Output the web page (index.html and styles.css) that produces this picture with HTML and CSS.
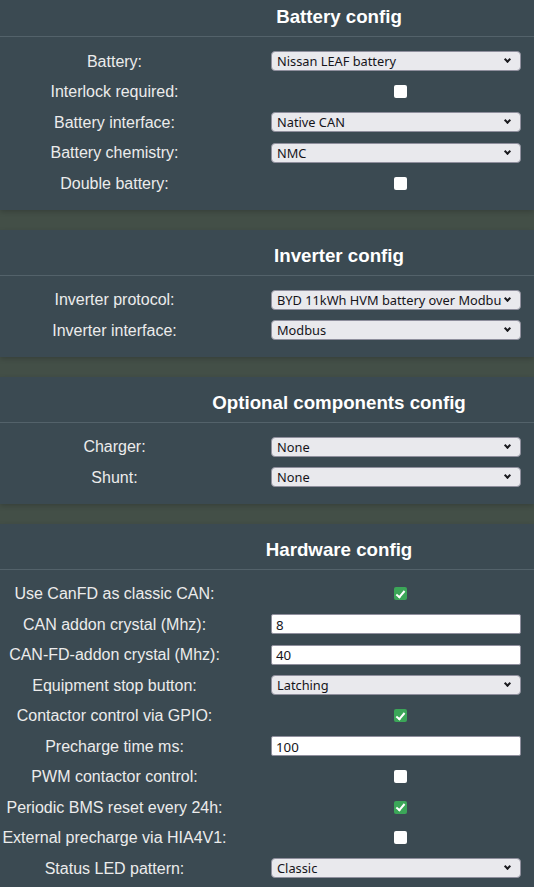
FILE: index.html
```html
<!DOCTYPE html>
<html lang="en">
<head>
    <meta charset="UTF-8">
    <meta name="viewport" content="width=device-width, initial-scale=1.0">
    <title>Settings</title>
    <link rel="stylesheet" href="styles.css">
</head>
<body>
    <div class="settings">
        <!-- Battery -->
        <section class="card">
            <h3 class="card-title">Battery config</h3>
            <div class="fields">
                <label class="field-label" for="battery">Battery:</label>
                <div class="select-wrap">
                    <select id="battery">
                        <option>Nissan LEAF battery</option>
                    </select>
                </div>

                <label class="field-label" for="interlock">Interlock required:</label>
                <input class="check" type="checkbox" id="interlock">

                <label class="field-label" for="batteryIf">Battery interface:</label>
                <div class="select-wrap">
                    <select id="batteryIf">
                        <option>Native CAN</option>
                    </select>
                </div>

                <label class="field-label" for="chemistry">Battery chemistry:</label>
                <div class="select-wrap">
                    <select id="chemistry">
                        <option>NMC</option>
                    </select>
                </div>

                <label class="field-label" for="doubleBattery">Double battery:</label>
                <input class="check" type="checkbox" id="doubleBattery">
            </div>
        </section>

        <!-- Inverter -->
        <section class="card">
            <h3 class="card-title">Inverter config</h3>
            <div class="fields">
                <label class="field-label" for="inverter">Inverter protocol:</label>
                <div class="select-wrap">
                    <select id="inverter">
                        <option>BYD 11kWh HVM battery over Modbus RTU</option>
                    </select>
                </div>

                <label class="field-label" for="inverterIf">Inverter interface:</label>
                <div class="select-wrap">
                    <select id="inverterIf">
                        <option>Modbus</option>
                    </select>
                </div>
            </div>
        </section>

        <!-- Optional -->
        <section class="card">
            <h3 class="card-title">Optional components config</h3>
            <div class="fields">
                <label class="field-label" for="charger">Charger:</label>
                <div class="select-wrap">
                    <select id="charger">
                        <option>None</option>
                    </select>
                </div>

                <label class="field-label" for="shunt">Shunt:</label>
                <div class="select-wrap">
                    <select id="shunt">
                        <option>None</option>
                    </select>
                </div>
            </div>
        </section>

        <!-- Hardware -->
        <section class="card">
            <h3 class="card-title">Hardware config</h3>
            <div class="fields">
                <label class="field-label" for="canfd">Use CanFD as classic CAN:</label>
                <input class="check" type="checkbox" id="canfd" checked>

                <label class="field-label" for="crystal">CAN addon crystal (Mhz):</label>
                <input class="text-input" type="text" id="crystal" value="8">

                <label class="field-label" for="fdCrystal">CAN-FD-addon crystal (Mhz):</label>
                <input class="text-input" type="text" id="fdCrystal" value="40">

                <label class="field-label" for="stopButton">Equipment stop button:</label>
                <div class="select-wrap">
                    <select id="stopButton">
                        <option>Latching</option>
                    </select>
                </div>

                <label class="field-label" for="gpio">Contactor control via GPIO:</label>
                <input class="check" type="checkbox" id="gpio" checked>

                <label class="field-label" for="precharge">Precharge time ms:</label>
                <input class="text-input" type="text" id="precharge" value="100">

                <label class="field-label" for="pwm">PWM contactor control:</label>
                <input class="check" type="checkbox" id="pwm">

                <label class="field-label" for="bmsReset">Periodic BMS reset every 24h:</label>
                <input class="check" type="checkbox" id="bmsReset" checked>

                <label class="field-label" for="hia">External precharge via HIA4V1:</label>
                <input class="check" type="checkbox" id="hia">

                <label class="field-label" for="ledPattern">Status LED pattern:</label>
                <div class="select-wrap">
                    <select id="ledPattern">
                        <option>Classic</option>
                    </select>
                </div>
            </div>
        </section>
    </div>
</body>
</html>
```

FILE: styles.css
```css
* {
    margin: 0;
    padding: 0;
    box-sizing: border-box;
}

body {
    font-family: 'Liberation Sans', Arial, sans-serif;
    background: #434f47;
    color: #ececec;
    overflow: hidden;
}

.settings {
    display: flex;
    flex-direction: column;
    gap: 20px;
    margin-top: -9px;
}

.card {
    background: #3b4a52;
    box-shadow: 0 2px 5px rgba(0, 0, 0, 0.18);
}

.card-title {
    font-size: 18.72px;
    font-weight: bold;
    line-height: 21px;
    color: #ffffff;
    text-align: center;
    padding: 15px 0 9px 144px;
    border-bottom: 1px solid #53626a;
}

.fields {
    display: grid;
    grid-template-columns: 229px 1fr;
    grid-auto-rows: 20px;
    column-gap: 42px;
    row-gap: 10.5px;
    align-items: center;
    padding: 14px 5px 16.5px 0;
}

.field-label {
    font-size: 16px;
    line-height: 20px;
    padding-top: 1px;
    text-align: center;
    white-space: nowrap;
}

/* form controls */
.select-wrap {
    position: relative;
    width: 250px;
    height: 20px;
}

/* small chevron on the right of each dropdown */
.select-wrap::after {
    content: '';
    position: absolute;
    right: 11px;
    top: 6px;
    width: 3px;
    height: 3px;
    border-right: 2px solid #1b1b1f;
    border-bottom: 2px solid #1b1b1f;
    transform: rotate(45deg);
    pointer-events: none;
}

.select-wrap select {
    appearance: none;
    -webkit-appearance: none;
    width: 100%;
    height: 20px;
    font-family: 'Noto Sans', sans-serif;
    font-size: 12.8px;
    color: #15141a;
    background: #e9e9ed;
    border: 1px solid #8f8f9d;
    border-radius: 4px;
    padding: 1px 18px 0 5px;
    line-height: 17px;
    white-space: nowrap;
    overflow: hidden;
    text-overflow: clip;
}

.text-input {
    width: 250px;
    height: 20px;
    font-family: 'Noto Sans', sans-serif;
    font-size: 13.3px;
    color: #15141a;
    background: #ffffff;
    border: 1px solid #8f8f9d;
    border-radius: 2px;
    padding: 1px 4px 0;
}

.check {
    appearance: none;
    -webkit-appearance: none;
    justify-self: center;
    position: relative;
    width: 13px;
    height: 13px;
    background: #ffffff;
    border-radius: 2px;
}

.check:checked {
    background: #3ba658;
}

.check:checked::after {
    content: '';
    position: absolute;
    left: 4px;
    top: 1.5px;
    width: 3px;
    height: 7px;
    border-right: 2px solid #ffffff;
    border-bottom: 2px solid #ffffff;
    transform: rotate(40deg);
}
```
